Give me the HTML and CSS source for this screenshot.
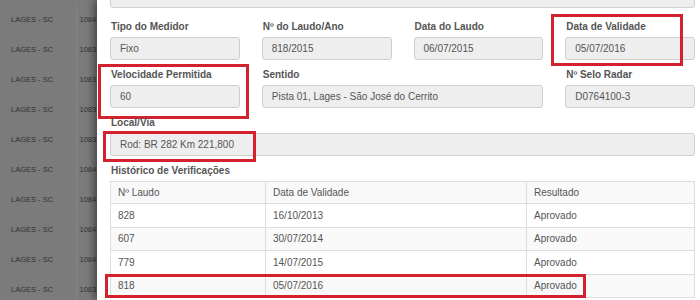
FILE: index.html
```html
<!DOCTYPE html>
<html lang="pt-br">
<head>
    <meta charset="UTF-8">
    <meta name="viewport" content="width=device-width, initial-scale=1.0">
    <title>Medidor</title>
    <link rel="stylesheet" href="styles.css">
</head>
<body>
    <div class="page">
        <aside class="backdrop">
            <table class="lista">
                <tr><td>LAGES - SC</td><td>1084</td></tr>
                <tr><td>LAGES - SC</td><td>1083</td></tr>
                <tr><td>LAGES - SC</td><td>1083</td></tr>
                <tr><td>LAGES - SC</td><td>1083</td></tr>
                <tr><td>LAGES - SC</td><td>1083</td></tr>
                <tr><td>LAGES - SC</td><td>1084</td></tr>
                <tr><td>LAGES - SC</td><td>1084</td></tr>
                <tr><td>LAGES - SC</td><td>1084</td></tr>
                <tr><td>LAGES - SC</td><td>1084</td></tr>
                <tr><td>LAGES - SC</td><td>1083</td></tr>
            </table>
        </aside>

        <main class="modal">
            <div class="modal-body">
                <div class="input topo">12.500.764/0001-07</div>

                <div class="grid">
                    <div class="field">
                        <label>Tipo do Medidor</label>
                        <div class="input">Fixo</div>
                    </div>
                    <div class="field">
                        <label>Nº do Laudo/Ano</label>
                        <div class="input">818/2015</div>
                    </div>
                    <div class="field">
                        <label>Data do Laudo</label>
                        <div class="input">06/07/2015</div>
                    </div>
                    <div class="field">
                        <label>Data de Validade</label>
                        <div class="input">05/07/2016</div>
                        <span class="mark mark-validade"></span>
                    </div>

                    <div class="field">
                        <label>Velocidade Permitida</label>
                        <div class="input">60</div>
                        <span class="mark mark-velocidade"></span>
                    </div>
                    <div class="field span2">
                        <label>Sentido</label>
                        <div class="input">Pista 01, Lages - São José do Cerrito</div>
                    </div>
                    <div class="field">
                        <label>Nº Selo Radar</label>
                        <div class="input">D0764100-3</div>
                    </div>

                    <div class="field span4">
                        <label>Local/Via</label>
                        <div class="input">Rod: BR 282 Km 221,800<span class="mark mark-local"></span></div>
                    </div>
                </div>

                <div class="field">
                    <label>Histórico de Verificações</label>
                    <table class="historico">
                        <tr><td class="c1">Nº Laudo</td><td class="c2">Data de Validade</td><td>Resultado</td></tr>
                        <tr><td>828</td><td>16/10/2013</td><td>Aprovado</td></tr>
                        <tr><td>607</td><td>30/07/2014</td><td>Aprovado</td></tr>
                        <tr><td>779</td><td>14/07/2015</td><td>Aprovado</td></tr>
                        <tr><td class="marcado">818<span class="mark mark-linha"></span></td><td>05/07/2016</td><td>Aprovado</td></tr>
                    </table>
                </div>
            </div>
        </main>
    </div>
</body>
</html>
```

FILE: styles.css
```css
*{
    margin: 0;
    padding: 0;
    box-sizing: border-box;
    font-family: "Liberation Sans", Arial, Helvetica, sans-serif;
}
body{
    width: 700px;
    height: 300px;
    overflow: hidden;
    background-color: #7b7b7b;
}
.page{
    display: flex;
    height: 300px;
}

/* lista ao fundo, escurecida */
.backdrop{
    width: 97px;
    flex-shrink: 0;
    overflow: hidden;
    padding-top: 4px;
}
.lista{
    border-collapse: collapse;
    table-layout: fixed;
    width: 120px;
    font-size: 7.5px;
    color: #333;
    white-space: nowrap;
}
.lista td{
    height: 30px;
    padding: 0 0 0 11px;
}
.lista td:first-child{
    width: 76px;
}
.lista td + td{
    border-left: 1px solid #858585;
    padding-left: 3px;
}

/* modal */
.modal{
    flex: 1;
    background-color: white;
    box-shadow: -3px 0 8px rgba(0, 0, 0, 0.45);
    position: relative;
    z-index: 1;
}
.modal-body{
    margin-top: -15px;
    padding: 0 5px 0 13px;
}
.input{
    position: relative;
    height: 23px;
    line-height: 21px;
    padding-left: 9px;
    font-size: 10px;
    color: #555;
    background-color: #eee;
    border: 1px solid #cfcfcf;
    border-radius: 3px;
    white-space: nowrap;
}
.topo{
    margin-bottom: 12px;
}
.grid{
    display: grid;
    grid-template-columns: repeat(4, 1fr);
    column-gap: 22px;
    row-gap: 8px;
    margin-bottom: 8px;
}
.field{
    position: relative;
}
.span2{
    grid-column: span 2;
}
.span4{
    grid-column: span 4;
}
label{
    display: block;
    font-size: 10px;
    font-weight: bold;
    line-height: 13px;
    margin-bottom: 4px;
    padding-left: 1px;
    color: #555;
}

/* marcações em vermelho */
.mark{
    position: absolute;
    border: 3px solid #d3212d;
    pointer-events: none;
}
.mark-validade{
    left: -14px;
    right: 12px;
    top: -6px;
    bottom: -6px;
}
.mark-velocidade{
    left: -12px;
    right: -9px;
    top: -4px;
    bottom: -11px;
}
.mark-local{
    left: -8px;
    width: 153px;
    top: -3px;
    bottom: -7px;
}
.mark-linha{
    left: -6px;
    top: -1px;
    width: 481px;
    height: 24px;
}

/* histórico */
.historico{
    width: 100%;
    border-collapse: collapse;
    font-size: 10px;
    color: #555;
}
.historico td{
    height: 23.5px;
    padding: 0 7px;
    border: 1px solid #ddd;
}
.historico tr:first-child td{
    height: 22px;
}
.historico tr:nth-child(odd){
    background-color: #f9f9f9;
}
.historico .c1{
    width: 155px;
}
.historico .c2{
    width: 261px;
}
.marcado{
    position: relative;
}
```
